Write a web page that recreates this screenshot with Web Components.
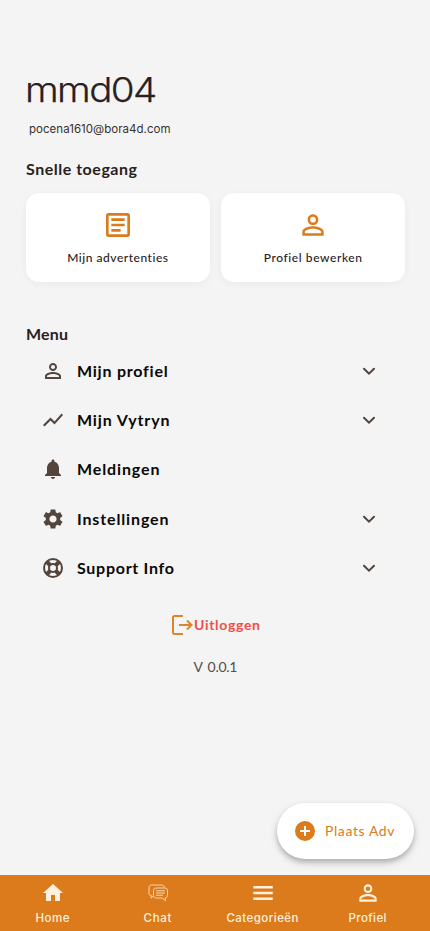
<!DOCTYPE html>
<html lang="nl">
<head>
<meta charset="utf-8">
<title>Profiel</title>
<style>
html,body{margin:0;height:100%}
body{font-family:Lato,"Liberation Sans",sans-serif;background:#f4f4f4;overflow:hidden}
</style>
</head>
<body>
<profile-page></profile-page>
<script>
const P = {
  article:'<rect x="4" y="4" width="16" height="16" rx="1" fill="none" stroke="currentColor" stroke-width="2"/><path d="M7 7h10v2H7zM7 11h10v2H7zM7 15h7v2H7z"/>',
  person:'<path d="M12 5.9a2.1 2.1 0 1 1 0 4.2 2.1 2.1 0 0 1 0-4.2m0 9c2.97 0 6.1 1.46 6.1 2.1v1.1H5.9V17c0-.64 3.13-2.1 6.1-2.1M12 4C9.79 4 8 5.79 8 8s1.79 4 4 4 4-1.79 4-4-1.79-4-4-4zm0 9c-2.67 0-8 1.34-8 4v3h16v-3c0-2.66-5.33-4-8-4z"/>',
  chart:'<path d="M3.5 18.49l6-6.01 4 4L22 6.92l-1.41-1.41-7.09 7.97-4-4L2 16.99z"/>',
  bell:'<path d="M12 22c1.1 0 2-.9 2-2h-4c0 1.1.89 2 2 2zm6-6v-5c0-3.07-1.64-5.64-4.5-6.32V4c0-.83-.67-1.5-1.5-1.5s-1.5.67-1.5 1.5v.68C7.63 5.36 6 7.92 6 11v5l-2 2v1h16v-1l-2-2z"/>',
  gear:'<path d="M19.14 12.94c.04-.3.06-.61.06-.94 0-.32-.02-.64-.07-.94l2.03-1.58c.18-.14.23-.41.12-.61l-1.92-3.32c-.12-.22-.37-.29-.59-.22l-2.39.96c-.5-.38-1.03-.7-1.62-.94l-.36-2.54c-.04-.24-.24-.41-.48-.41h-3.84c-.24 0-.43.17-.47.41l-.36 2.54c-.59.24-1.13.57-1.62.94l-2.39-.96c-.22-.08-.47 0-.59.22L2.74 8.87c-.12.21-.08.47.12.61l2.03 1.58c-.05.3-.09.63-.09.94s.02.64.07.94l-2.03 1.58c-.18.14-.23.41-.12.61l1.92 3.32c.12.22.37.29.59.22l2.39-.96c.5.38 1.03.7 1.62.94l.36 2.54c.05.24.24.41.48.41h3.84c.24 0 .44-.17.47-.41l.36-2.54c.59-.24 1.13-.56 1.62-.94l2.39.96c.22.08.47 0 .59-.22l1.92-3.32c.12-.22.07-.47-.12-.61l-2.01-1.58zM12 15.6c-1.98 0-3.6-1.62-3.6-3.6s1.62-3.6 3.6-3.6 3.6 1.62 3.6 3.6-1.62 3.6-3.6 3.6z"/>',
  support:'<g fill="none" stroke="currentColor"><circle cx="12" cy="12" r="9" stroke-width="2"/><circle cx="12" cy="12" r="4" stroke-width="2"/><path stroke-width="4.2" d="M5.6 5.6l3.4 3.4M18.4 5.6L15 9M5.6 18.4L9 15M18.4 18.4L15 15"/></g>',
  down:'<path d="M7 9.8l5 4.8 5-4.8" fill="none" stroke="currentColor" stroke-width="2" stroke-linecap="round"/>',
  logout:'<path d="M13 3H4.5Q3 3 3 4.5v15Q3 21 4.5 21H13M9 12h12.5M17 7.500l4.500 4.500-4.500 4.500" fill="none" stroke="currentColor" stroke-width="2"/>',
  plus:'<path d="M12 2a10 10 0 1 0 0 20 10 10 0 0 0 0-20zm5 11h-4v4h-2v-4H7v-2h4V7h2v4h4z"/>',
  home:'<path d="M10 20v-6h4v6h5v-8h3L12 3 2 12h3v8z"/>',
  chat:'<g fill="none" stroke="currentColor" stroke-width=".9" opacity=".85"><path d="M7 15l-1.8 2.2V14.500C3.600 14.500 3 13.500 3 12V6.800C3 5 3.800 4 5.300 4h10.200c1.800 0 2.800 1 2.800 2.500"/><path d="M10.500 7h8c2 0 3 1 3 2.700v4.600c0 1.600-.9 2.400-2.200 2.500v3L16.500 17h-6c-2 0-3-1-3-2.700V9.700C7.500 8 8.500 7 10.500 7zM10 9.800h9M10 12h9M10 14.200h7"/></g>',
  menu:'<path d="M3 5.5h18v2.4H3zM3 10.800h18v2.400H3zM3 16.100h18v2.400H3z"/>'
};

class UiIcon extends HTMLElement{
  connectedCallback(){
    if(this.shadowRoot) return;
    const s=this.getAttribute('size')||24;
    this.attachShadow({mode:'open'}).innerHTML=`<style>:host{display:block;flex:none;width:${s}px;height:${s}px}svg{display:block;width:100%;height:100%}</style><svg viewBox="0 0 24 24" fill="currentColor">${P[this.getAttribute('name')]}</svg>`;
  }
}
customElements.define('ui-icon',UiIcon);

/* Single line of text tracked to a given width. */
class TrackedText extends HTMLElement{
  connectedCallback(){
    if(this.shadowRoot) return;
    this.attachShadow({mode:'open'}).innerHTML='<style>:host{display:block;flex:none;white-space:nowrap}span{display:inline-block}</style><span><slot></slot></span>';
    const s=this.shadowRoot.querySelector('span'), w=+this.getAttribute('width'), n=this.textContent.length;
    s.style.letterSpacing='0';
    const k=(w-s.getBoundingClientRect().width)/(n-1);
    s.style.letterSpacing=k+'px';
    s.style.marginRight=-k+'px';
  }
}
customElements.define('tracked-text',TrackedText);

class QuickCard extends HTMLElement{
  connectedCallback(){
    if(this.shadowRoot) return;
    this.attachShadow({mode:'open'}).innerHTML=`<style>:host{display:flex;flex-direction:column;align-items:center;box-sizing:border-box;height:89px;padding-top:16px;background:#fff;border-radius:13px;box-shadow:0 2px 8px rgba(0,0,0,.045)}
    ui-icon{color:#db7b1b}tracked-text{margin-top:9px;font-size:12px;line-height:16px;font-weight:500;color:#29211d}</style>
    <ui-icon name="${this.getAttribute('icon')}" size="32"></ui-icon><tracked-text width="${this.getAttribute('w')}">${this.getAttribute('label')}</tracked-text>`;
  }
}
customElements.define('quick-card',QuickCard);

class MenuRow extends HTMLElement{
  connectedCallback(){
    if(this.shadowRoot) return;
    this.attachShadow({mode:'open'}).innerHTML=`<style>:host{display:flex;align-items:center;height:49.4px;color:#53443c}
    tracked-text{margin-left:12px;font-size:16px;line-height:20px;font-weight:700;color:#090807}.down{margin-left:auto}</style>
    <ui-icon name="${this.getAttribute('icon')}"></ui-icon><tracked-text width="${this.getAttribute('w')}">${this.getAttribute('label')}</tracked-text>${this.hasAttribute('open-more')?'<ui-icon class="down" name="down"></ui-icon>':''}`;
  }
}
customElements.define('menu-row',MenuRow);

class NavItem extends HTMLElement{
  connectedCallback(){
    if(this.shadowRoot) return;
    this.attachShadow({mode:'open'}).innerHTML=`<style>:host{display:flex;flex-direction:column;align-items:center;padding-top:5px;color:#fff1dd}
    .i{height:26px;display:grid;place-items:center}tracked-text{margin-top:4px;font:450 11.5px/16px Inter,"Liberation Sans",sans-serif}</style>
    <div class="i"><ui-icon name="${this.getAttribute('icon')}" size="${this.getAttribute('size')}"></ui-icon></div><tracked-text width="${this.getAttribute('w')}">${this.getAttribute('label')}</tracked-text>`;
  }
}
customElements.define('nav-item',NavItem);

class ProfilePage extends HTMLElement{
  connectedCallback(){
    if(this.shadowRoot) return;
    this.attachShadow({mode:'open'}).innerHTML=`<style>
    :host{display:flex;flex-direction:column;width:430px;height:931px;position:relative;color:#29211d}
    main{flex:1;padding:68px 25px 0 25px}
    .name{font:300 34.5px/44px Inter,Lato,sans-serif;-webkit-text-stroke:.25px;transform:scaleX(1.12);transform-origin:0 0}
    .mail{font:400 11.5px/16px Inter,Lato,sans-serif;margin:9px 0 0 4px;color:#39312d}
    .h{font-size:16px;line-height:20px;font-weight:700;margin-left:1px}
    .quick{margin-top:22px}
    .cards{display:grid;grid-template-columns:1fr 1fr;gap:11px;margin:14px 0 0 .5px}
    .menu{margin-top:42px}
    .rows{margin:2px 24px 0 16px}
    .out{display:flex;align-items:center;justify-content:center;margin:20.500px 0 0 0;font-size:14px;line-height:20px;font-weight:700;color:#f24d48}
    .out ui-icon{color:#dc862c}
    .ver{display:flex;justify-content:center;margin:20px 0 0 1px;font-size:14px;line-height:20px;word-spacing:2px;color:#554d48}
    .fab{position:absolute;left:277px;top:803px;width:137px;height:56px;box-sizing:border-box;padding-left:16px;display:flex;align-items:center;gap:8px;border-radius:28px;background:#fff;color:#db7b1b;font-size:14px;line-height:20px;box-shadow:0 3px 5px rgba(0,0,0,.2),0 4px 10px rgba(0,0,0,.12)}
    nav{display:grid;grid-template-columns:repeat(4,105px);height:56px;background:#db7b1b;position:relative}
    </style>
    <main>
      <tracked-text class="name" width="133">mmd04</tracked-text>
      <tracked-text class="mail" width="141.5">pocena1610@bora4d.com</tracked-text>
      <tracked-text class="h quick" width="111">Snelle toegang</tracked-text>
      <div class="cards"><quick-card icon="article" label="Mijn advertenties" w="101"></quick-card><quick-card icon="person" label="Profiel bewerken" w="98"></quick-card></div>
      <tracked-text class="h menu" width="42">Menu</tracked-text>
      <div class="rows">
        <menu-row icon="person" label="Mijn profiel" w="90.5" open-more></menu-row>
        <menu-row icon="chart" label="Mijn Vytryn" w="92.5" open-more></menu-row>
        <menu-row icon="bell" label="Meldingen" w="82.5"></menu-row>
        <menu-row icon="gear" label="Instellingen" w="91.5" open-more></menu-row>
        <menu-row icon="support" label="Support Info" w="97" open-more></menu-row>
      </div>
      <div class="out"><ui-icon name="logout"></ui-icon><tracked-text width="66">Uitloggen</tracked-text></div>
      <div class="ver"><tracked-text width="44">V 0.0.1</tracked-text></div>
    </main>
    <div class="fab"><ui-icon name="plus"></ui-icon><tracked-text width="69.5">Plaats Adv</tracked-text></div>
    <nav><nav-item icon="home" size="24" label="Home" w="34"></nav-item><nav-item icon="chat" size="24" label="Chat" w="28"></nav-item><nav-item icon="menu" size="26" label="Categorieën" w="72"></nav-item><nav-item icon="person" size="26" label="Profiel" w="38"></nav-item></nav>`;
  }
}
customElements.define('profile-page',ProfilePage);
</script>
</body>
</html>
